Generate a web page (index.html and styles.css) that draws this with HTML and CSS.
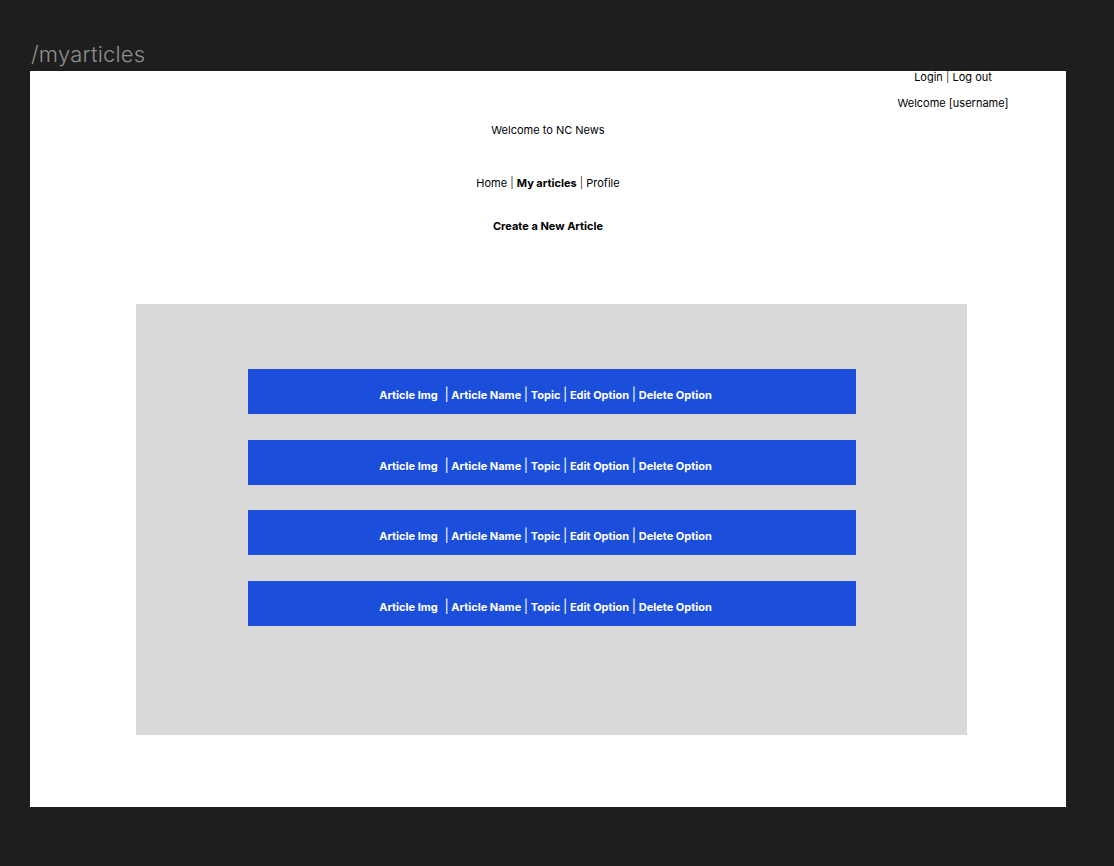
FILE: index.html
```html
<!DOCTYPE html>
<html>
<head>
<meta charset="utf-8">
<link rel="stylesheet" href="styles.css">
</head>
<body>
<div class="label">/myarticles</div>
<div class="frame">
  <div class="account">
    <div class="auth">Login <span class="sep">|</span> Log out</div>
    <div class="welcome-user">Welcome [username]</div>
  </div>
  <div class="title">Welcome to NC News</div>
  <nav class="nav">Home <span class="sep">|</span> <b>My articles</b> <span class="sep">|</span> Profile</nav>
  <div class="create">Create a New Article</div>
  <div class="panel">
    <div class="row">Article Img <span class="gap"></span><span class="sep">|</span> Article Name <span class="sep">|</span> Topic <span class="sep">|</span> Edit Option <span class="sep">|</span> Delete Option</div>
    <div class="row">Article Img <span class="gap"></span><span class="sep">|</span> Article Name <span class="sep">|</span> Topic <span class="sep">|</span> Edit Option <span class="sep">|</span> Delete Option</div>
    <div class="row">Article Img <span class="gap"></span><span class="sep">|</span> Article Name <span class="sep">|</span> Topic <span class="sep">|</span> Edit Option <span class="sep">|</span> Delete Option</div>
    <div class="row">Article Img <span class="gap"></span><span class="sep">|</span> Article Name <span class="sep">|</span> Topic <span class="sep">|</span> Edit Option <span class="sep">|</span> Delete Option</div>
  </div>
</div>
</body>
</html>
```
FILE: styles.css
```css
html, body {
  margin: 0;
  padding: 0;
  background: #1e1e1e;
  font-family: Inter, "Liberation Sans", sans-serif;
}
.label {
  padding: 40px 0 0 31px;
  height: 71px;
  box-sizing: border-box;
  font-size: 22px;
  line-height: 28px;
  color: #8f8f8f;
  font-weight: 300;
  letter-spacing: 0.2px;
}
.frame {
  margin-left: 30px;
  width: 1036px;
  height: 736px;
  background: #ffffff;
  display: flex;
  flex-direction: column;
  align-items: center;
  color: #000;
  font-size: 11px;
}
.account {
  align-self: flex-end;
  width: 140px;
  margin-right: 43px;
  display: flex;
  flex-direction: column;
  align-items: center;
  line-height: 14px;
}
.auth { margin-top: -1px; }
.welcome-user { margin-top: 12px; }
.sep { font-weight: 300; }
.title {
  margin-top: 13px;
  line-height: 14px;
}
.nav {
  margin-top: 39px;
  line-height: 14px;
}
.nav b { font-weight: 700; }
.create {
  margin-top: 29px;
  line-height: 14px;
  font-weight: 700;
}
.panel {
  margin-top: 71px;
  margin-left: 106px;
  align-self: flex-start;
  width: 831px;
  height: 431px;
  background: #d9d9d9;
  display: flex;
  flex-direction: column;
  align-items: center;
  padding-top: 65px;
  box-sizing: border-box;
  gap: 25.5px;
}
.row {
  width: 608px;
  height: 45px;
  box-sizing: border-box;
  background: #1b4fdb;
  color: #fff;
  font-weight: 700;
  font-size: 11px;
  text-align: center;
  padding-top: 18px;
  padding-right: 12px;
  line-height: 14px;
}
.row .sep { font-weight: 400; font-size: 13px; }
.row .gap { display: inline-block; width: 4px; }
```
